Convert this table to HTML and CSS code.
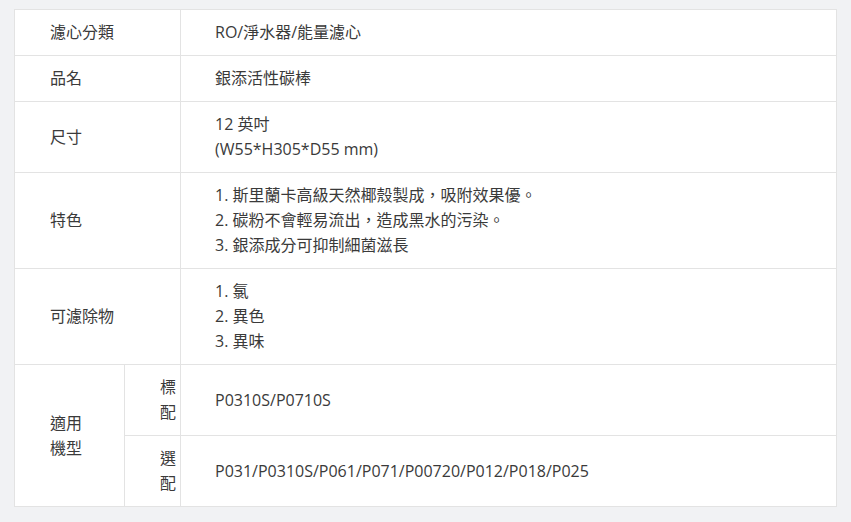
FILE: index.html
```html
<!DOCTYPE html>
<html lang="zh-Hant">
<head>
<meta charset="utf-8">
<link rel="stylesheet" href="styles.css">
</head>
<body>
<table class="spec">
  <colgroup>
    <col class="c-label">
    <col class="c-sub">
    <col class="c-value">
  </colgroup>
  <tr>
    <td class="label" colspan="2">濾心分類</td>
    <td class="value">RO/淨水器/能量濾心</td>
  </tr>
  <tr>
    <td class="label" colspan="2">品名</td>
    <td class="value">銀添活性碳棒</td>
  </tr>
  <tr>
    <td class="label" colspan="2">尺寸</td>
    <td class="value">12 英吋<br>(W55*H305*D55 mm)</td>
  </tr>
  <tr>
    <td class="label" colspan="2">特色</td>
    <td class="value">1. 斯里蘭卡高級天然椰殼製成，吸附效果優。<br>2. 碳粉不會輕易流出，造成黑水的污染。<br>3. 銀添成分可抑制細菌滋長</td>
  </tr>
  <tr>
    <td class="label" colspan="2">可濾除物</td>
    <td class="value">1. 氯<br>2. 異色<br>3. 異味</td>
  </tr>
  <tr>
    <td class="label" rowspan="2">適用<br>機型</td>
    <td class="sub">標配</td>
    <td class="value">P0310S/P0710S</td>
  </tr>
  <tr>
    <td class="sub">選配</td>
    <td class="value">P031/P0310S/P061/P071/P00720/P012/P018/P025</td>
  </tr>
</table>
</body>
</html>
```
FILE: styles.css
```css
html, body {
  margin: 0;
  padding: 0;
  background: #f1f2f4;
}
body {
  padding: 9px 0 0 14px;
  font-family: "Open Sans", "Noto Sans CJK TC", sans-serif;
  font-size: 16px;
  color: #3a3a3a;
}
.spec {
  width: 823px;
  border-collapse: collapse;
  table-layout: fixed;
  background: #fff;
  border: 1px solid #dedede;
}
.c-label { width: 110px; }
.c-sub { width: 56px; }
.spec td {
  border: 1px solid #e3e3e3;
  padding: 10px 4px 10px 35px;
  line-height: 25px;
  vertical-align: middle;
  text-align: left;
}
.spec td.value {
  padding-left: 34px;
}
.spec td.sub {
  word-break: break-all;
}
```
